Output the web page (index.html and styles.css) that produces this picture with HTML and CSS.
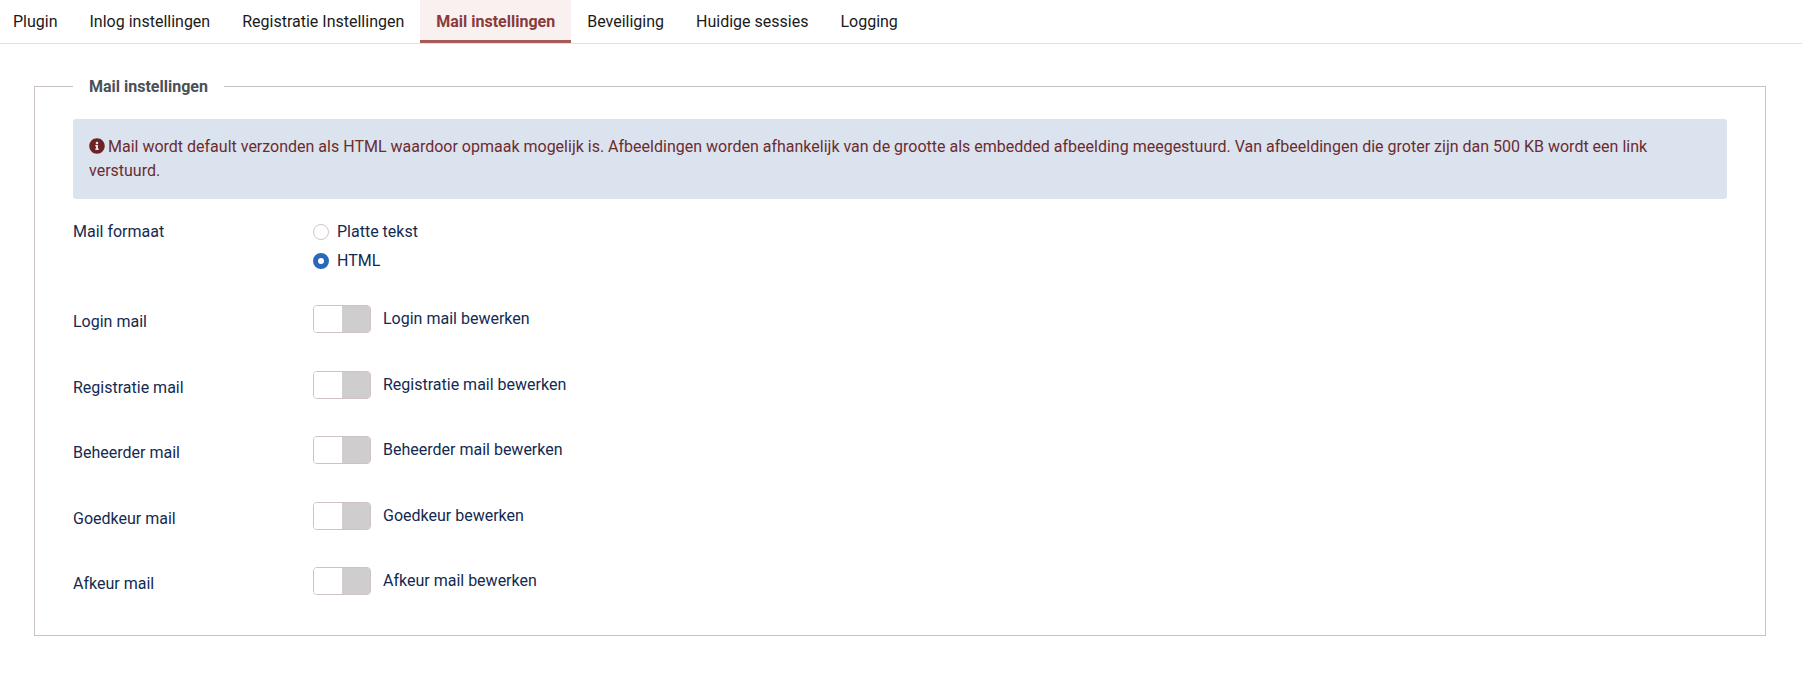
FILE: index.html
```html
<!DOCTYPE html>
<html lang="nl">
  <head>
    <meta charset="UTF-8" />
    <meta name="viewport" content="width=device-width, initial-scale=1.0" />
    <title>Mail instellingen</title>
    <link rel="stylesheet" href="styles.css">
  </head>
  <body>
    <div class="tabs">
      <a class="tab">Plugin</a>
      <a class="tab">Inlog instellingen</a>
      <a class="tab">Registratie Instellingen</a>
      <a class="tab active">Mail instellingen</a>
      <a class="tab">Beveiliging</a>
      <a class="tab">Huidige sessies</a>
      <a class="tab">Logging</a>
    </div>

    <div class="content">
      <fieldset class="box">
        <legend><span class="legend-text">Mail instellingen</span></legend>

        <div class="alert">
          <svg class="info" viewBox="0 0 512 512"><path d="M256 8C119.043 8 8 119.083 8 256c0 136.997 111.043 248 248 248s248-111.003 248-248C504 119.083 392.957 8 256 8zm0 110c23.196 0 42 18.804 42 42s-18.804 42-42 42-42-18.804-42-42 18.804-42 42-42zm56 254c0 6.627-5.373 12-12 12h-88c-6.627 0-12-5.373-12-12v-24c0-6.627 5.373-12 12-12h12v-64h-12c-6.627 0-12-5.373-12-12v-24c0-6.627 5.373-12 12-12h64c6.627 0 12 5.373 12 12v100h12c6.627 0 12 5.373 12 12v24z"/></svg>
          Mail wordt default verzonden als HTML waardoor opmaak mogelijk is. Afbeeldingen worden afhankelijk van de grootte als embedded afbeelding meegestuurd. Van afbeeldingen die groter zijn dan 500 KB wordt een link verstuurd.
        </div>

        <div class="row row-radio">
          <div class="label">Mail formaat</div>
          <div class="radios">
            <label class="radio"><input type="radio" name="format" /> Platte tekst</label>
            <label class="radio"><input type="radio" name="format" checked /> HTML</label>
          </div>
        </div>

        <div class="row">
          <div class="label">Login mail</div>
          <div class="control"><span class="switch"><span class="knob"></span><span class="off"></span></span><span class="switch-text">Login mail bewerken</span></div>
        </div>
        <div class="row">
          <div class="label">Registratie mail</div>
          <div class="control"><span class="switch"><span class="knob"></span><span class="off"></span></span><span class="switch-text">Registratie mail bewerken</span></div>
        </div>
        <div class="row">
          <div class="label">Beheerder mail</div>
          <div class="control"><span class="switch"><span class="knob"></span><span class="off"></span></span><span class="switch-text">Beheerder mail bewerken</span></div>
        </div>
        <div class="row">
          <div class="label">Goedkeur mail</div>
          <div class="control"><span class="switch"><span class="knob"></span><span class="off"></span></span><span class="switch-text">Goedkeur bewerken</span></div>
        </div>
        <div class="row">
          <div class="label">Afkeur mail</div>
          <div class="control"><span class="switch"><span class="knob"></span><span class="off"></span></span><span class="switch-text">Afkeur mail bewerken</span></div>
        </div>
      </fieldset>
    </div>
  </body>
</html>
```

FILE: styles.css
```css
* {
  margin: 0;
  padding: 0;
  box-sizing: border-box;
}

body {
  background: #fff;
  color: #132a52;
  font-family: Roboto, "Liberation Sans", sans-serif;
  font-size: 16px;
  line-height: 24px;
}

.tabs {
  display: flex;
  height: 44px;
  border-bottom: 1px solid #e3dfe2;
}
.tab {
  display: block;
  height: 43px;
  padding: 10px 16px 0;
  color: #1a1a1a;
}
.tab:first-child {
  padding-left: 13px;
}
.tab.active {
  background: #f8f1f0;
  border-bottom: 3px solid #a65a5a;
  color: #8a3a3a;
  font-weight: 700;
}

.content {
  padding: 30px 36px 0 34px;
}

.box {
  border: 1px solid #c9c1c5;
  padding: 0 38px 0;
  height: 562px;
}
.box legend {
  height: 24px;
  padding: 0 16px;
  color: #495057;
  font-weight: 700;
}
.legend-text {
  display: block;
  padding-top: 1px;
}

.alert {
  height: 80px;
  margin-top: 21px;
  margin-bottom: 16px;
  padding: 16px;
  background: #dbe3ef;
  border-radius: 3px;
  color: #6b2c2f;
}
.info {
  width: 16px;
  height: 16px;
  margin-right: -1px;
  vertical-align: -2px;
  fill: #6b2326;
}

.row {
  display: flex;
  height: 65.5px;
}
.row-radio {
  height: 90px;
}
.label {
  width: 240px;
  padding-top: 5px;
}

.radios {
  padding-top: 2px;
}
.radio {
  display: flex;
  align-items: center;
  gap: 8px;
  height: 29px;
  line-height: 24px;
}
.radio input {
  appearance: none;
  width: 16px;
  height: 16px;
  border: 1px solid #d3c6c9;
  border-radius: 50%;
  background: #fff;
}
.radio input:checked {
  border: 5px solid #2a69b8;
}

.control {
  display: flex;
  align-items: flex-start;
}
.switch {
  display: flex;
  width: 58px;
  height: 28px;
  border: 1px solid #cfc2c5;
  border-radius: 4px;
  overflow: hidden;
}
.knob {
  flex: 1;
  background: #fff;
}
.off {
  flex: 1;
  background: #d0cdcf;
}
.switch-text {
  margin-left: 12px;
  line-height: 28px;
}
```
